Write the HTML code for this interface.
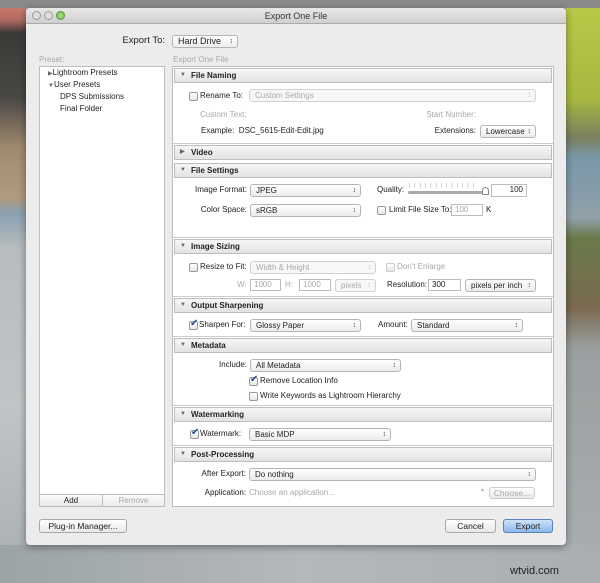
<!DOCTYPE html>
<html><head><meta charset="utf-8"><style>
*{margin:0;padding:0;box-sizing:border-box}
body{width:600px;height:583px;overflow:hidden;position:relative;font-family:"Liberation Sans",sans-serif;font-size:8px;color:#222;
background:linear-gradient(180deg,#8a8a8a 0,#8a8a8a 8px,#9aa0a4 8px,#a4a9ac 583px)}
.a{position:absolute}
.t{position:absolute;white-space:nowrap;line-height:10px}
.r{text-align:right}
.g{color:#a8a8a8}
.sel{position:absolute;height:13px;border:1px solid #b4b4b4;border-radius:3px;background:linear-gradient(#fff,#ececec);padding-left:5px;line-height:11px;font-size:8px}
.sel:after{content:"\2195";position:absolute;right:4px;top:0;font-size:7px;color:#444}
.sel.d{color:#aaa;border-color:#d2d2d2;background:#f7f7f7}
.sel.d:after{color:#bbb}
.box{position:absolute;height:12px;border:1px solid #bdbdbd;background:#fff;line-height:10px;padding:0 3px}
.hdr{position:absolute;left:174px;width:378px;height:15px;border:1px solid #bdbdbd;background:linear-gradient(#f6f6f6,#e3e3e3);font-weight:bold;line-height:13px;padding-left:16px}
.hdr:before{content:"\25BC";position:absolute;left:5px;top:0;font-size:6px;color:#666}
.hdr.c:before{content:"\25B6"}
.cb{position:absolute;width:9px;height:9px;border:1px solid #9a9a9a;border-radius:2px;background:linear-gradient(#fff,#e6e6e6)}
.cb.k:after{content:"\2714";position:absolute;left:0;top:-4px;font-size:10px;color:#2a4d8a}
.btn{position:absolute;height:14px;border:1px solid #a9a9a9;border-radius:3px;background:linear-gradient(#fff,#e8e8e8);text-align:center;line-height:12px;font-size:8.5px}
</style></head><body>
<!-- background strips -->
<div class="a" style="left:0;top:8px;width:26px;height:575px;background:linear-gradient(180deg,#c8786a 0,#b06a60 12px,#3a3a38 25px,#4a4844 90px,#a08a70 140px,#b09a80 190px,#8aa0b0 205px,#b8bcbe 240px,#c0c4c6 400px,#a8adb0 583px)"></div>
<div class="a" style="left:566px;top:8px;width:34px;height:575px;background:linear-gradient(180deg,#b8c848 0,#a8b840 90px,#7a8060 130px,#7a98aa 150px,#90a0a8 210px,#6a7a4a 230px,#7a6a50 300px,#9aa0a0 340px,#aab0b2 583px)"></div>
<div class="a" style="left:0;top:545px;width:600px;height:38px;background:linear-gradient(90deg,#9ca4a8,#b4b8ba,#a8aeb2)"></div>
<div class="t" style="left:510px;top:566px;font-size:11px;color:#222">wtvid.com</div>
<!-- window -->
<div class="a" style="left:26px;top:8px;width:540px;height:537px;background:#ececec;border-radius:4px;box-shadow:0 2px 8px rgba(0,0,0,.4)"></div>
<div class="a" style="left:26px;top:8px;width:540px;height:16px;background:linear-gradient(#e8e8e8,#cfcfcf);border-radius:4px 4px 0 0;border-bottom:1px solid #aaa"></div>
<div class="a" style="left:32px;top:11px;width:9px;height:9px;border-radius:50%;border:1px solid #999;background:#ddd"></div>
<div class="a" style="left:44px;top:11px;width:9px;height:9px;border-radius:50%;border:1px solid #999;background:#ddd"></div>
<div class="a" style="left:56px;top:11px;width:9px;height:9px;border-radius:50%;border:1px solid #5a9a3a;background:radial-gradient(#b8e890,#60b040)"></div>
<div class="t" style="left:26px;width:540px;top:11px;text-align:center;font-size:9px;color:#333">Export One File</div>
<div class="t r" style="left:100px;width:65px;top:36px;font-size:9.5px">Export To:</div>
<div class="sel" style="left:172px;top:35px;width:66px;font-size:9px">Hard Drive</div>
<div class="t g" style="left:39px;top:55px">Preset:</div>
<div class="t g" style="left:173px;top:55px">Export One File</div>
<!-- left panel -->
<div class="a" style="left:39px;top:66px;width:126px;height:441px;background:#fff;border:1px solid #bdbdbd"></div>
<div class="t" style="left:48px;top:68px"><span style="font-size:6px;color:#666">&#9654;</span>Lightroom Presets</div>
<div class="t" style="left:48px;top:80px"><span style="font-size:6px;color:#666">&#9660;</span>User Presets</div>
<div class="t" style="left:60px;top:92px">DPS Submissions</div>
<div class="t" style="left:60px;top:104px">Final Folder</div>
<div class="a" style="left:39px;top:494px;width:64px;height:13px;border:1px solid #bdbdbd;background:linear-gradient(#fafafa,#e8e8e8);text-align:center;line-height:11px">Add</div>
<div class="a g" style="left:102px;top:494px;width:63px;height:13px;border:1px solid #bdbdbd;background:linear-gradient(#fafafa,#ececec);text-align:center;line-height:11px">Remove</div>
<!-- right panel -->
<div class="a" style="left:172px;top:66px;width:382px;height:441px;background:#fff;border:1px solid #bdbdbd"></div>
<div class="hdr" style="top:68px">File Naming</div>
<div class="cb" style="left:189px;top:92px"></div>
<div class="t" style="left:200px;top:91px">Rename To:</div>
<div class="sel d" style="left:249px;top:89px;width:287px">Custom Settings</div>
<div class="t g" style="left:200px;top:110px">Custom Text:</div>
<div class="t g r" style="left:400px;width:76px;top:110px">Start Number:</div>
<div class="t" style="left:201px;top:126px">Example:&nbsp; DSC_5615-Edit-Edit.jpg</div>
<div class="t r" style="left:400px;width:76px;top:126px">Extensions:</div>
<div class="sel" style="left:480px;top:125px;width:56px">Lowercase</div>
<div class="a" style="left:173px;top:143px;width:380px;height:1px;background:#ccc"></div>
<div class="hdr c" style="top:145px">Video</div>
<div class="hdr" style="top:163px">File Settings</div>
<div class="t r" style="left:170px;width:77px;top:185px">Image Format:</div>
<div class="sel" style="left:250px;top:184px;width:111px">JPEG</div>
<div class="t" style="left:377px;top:185px">Quality:</div>
<div class="a" style="left:408px;top:191px;width:80px;height:3px;background:#aaa;border-radius:2px"></div>
<div class="t" style="left:409px;top:181px;color:#999;font-size:5px;letter-spacing:4px">|||||||||||||</div>
<div class="a" style="left:482px;top:187px;width:7px;height:8px;border:1px solid #888;background:#fff;border-radius:4px 4px 1px 1px"></div>
<div class="box r" style="left:491px;top:184px;width:36px;height:13px">100</div>
<div class="t r" style="left:170px;width:77px;top:205px">Color Space:</div>
<div class="sel" style="left:250px;top:204px;width:111px">sRGB</div>
<div class="cb" style="left:377px;top:206px"></div>
<div class="t" style="left:389px;top:205px">Limit File Size To:</div>
<div class="box g" style="left:451px;top:204px;width:32px">100</div>
<div class="t" style="left:486px;top:205px">K</div>
<div class="a" style="left:173px;top:237px;width:380px;height:1px;background:#ccc"></div>
<div class="hdr" style="top:239px">Image Sizing</div>
<div class="cb" style="left:189px;top:263px"></div>
<div class="t" style="left:200px;top:262px">Resize to Fit:</div>
<div class="sel d" style="left:250px;top:261px;width:126px">Width &amp; Height</div>
<div class="cb" style="left:386px;top:263px;border-color:#ccc"></div>
<div class="t g" style="left:397px;top:262px">Don't Enlarge</div>
<div class="t g" style="left:237px;top:280px">W:</div>
<div class="box g" style="left:250px;top:279px;width:31px">1000</div>
<div class="t g" style="left:285px;top:280px">H:</div>
<div class="box g" style="left:299px;top:279px;width:32px">1000</div>
<div class="sel d" style="left:335px;top:279px;width:41px">pixels</div>
<div class="t" style="left:387px;top:280px">Resolution:</div>
<div class="box" style="left:428px;top:279px;width:33px">300</div>
<div class="sel" style="left:465px;top:279px;width:71px">pixels per inch</div>
<div class="a" style="left:173px;top:296px;width:380px;height:1px;background:#ccc"></div>
<div class="hdr" style="top:298px">Output Sharpening</div>
<div class="cb k" style="left:189px;top:321px"></div>
<div class="t" style="left:199px;top:320px">Sharpen For:</div>
<div class="sel" style="left:250px;top:319px;width:111px">Glossy Paper</div>
<div class="t" style="left:378px;top:320px">Amount:</div>
<div class="sel" style="left:411px;top:319px;width:112px">Standard</div>
<div class="a" style="left:173px;top:336px;width:380px;height:1px;background:#ccc"></div>
<div class="hdr" style="top:338px">Metadata</div>
<div class="t r" style="left:180px;width:67px;top:360px">Include:</div>
<div class="sel" style="left:250px;top:359px;width:151px">All Metadata</div>
<div class="cb k" style="left:249px;top:377px"></div>
<div class="t" style="left:260px;top:376px">Remove Location Info</div>
<div class="cb" style="left:249px;top:392px"></div>
<div class="t" style="left:260px;top:391px">Write Keywords as Lightroom Hierarchy</div>
<div class="a" style="left:173px;top:405px;width:380px;height:1px;background:#ccc"></div>
<div class="hdr" style="top:407px">Watermarking</div>
<div class="cb k" style="left:190px;top:430px"></div>
<div class="t" style="left:200px;top:429px">Watermark:</div>
<div class="sel" style="left:249px;top:428px;width:142px">Basic MDP</div>
<div class="a" style="left:173px;top:445px;width:380px;height:1px;background:#ccc"></div>
<div class="hdr" style="top:447px">Post-Processing</div>
<div class="t r" style="left:180px;width:66px;top:469px">After Export:</div>
<div class="sel" style="left:249px;top:468px;width:287px">Do nothing</div>
<div class="t r" style="left:180px;width:66px;top:488px">Application:</div>
<div class="t g" style="left:249px;top:488px">Choose an application...</div>
<div class="t g" style="left:480px;top:486px;font-size:5px">&#9660;</div>
<div class="btn g" style="left:489px;top:487px;width:46px;height:12px;line-height:10px;border-color:#ccc">Choose...</div>
<!-- bottom buttons -->
<div class="btn" style="left:39px;top:519px;width:88px">Plug-in Manager...</div>
<div class="btn" style="left:445px;top:519px;width:51px">Cancel</div>
<div class="btn" style="left:503px;top:519px;width:50px;border-color:#5a82b8;background:linear-gradient(#cfe2f8,#8cb8ea)">Export</div>
</body></html>
